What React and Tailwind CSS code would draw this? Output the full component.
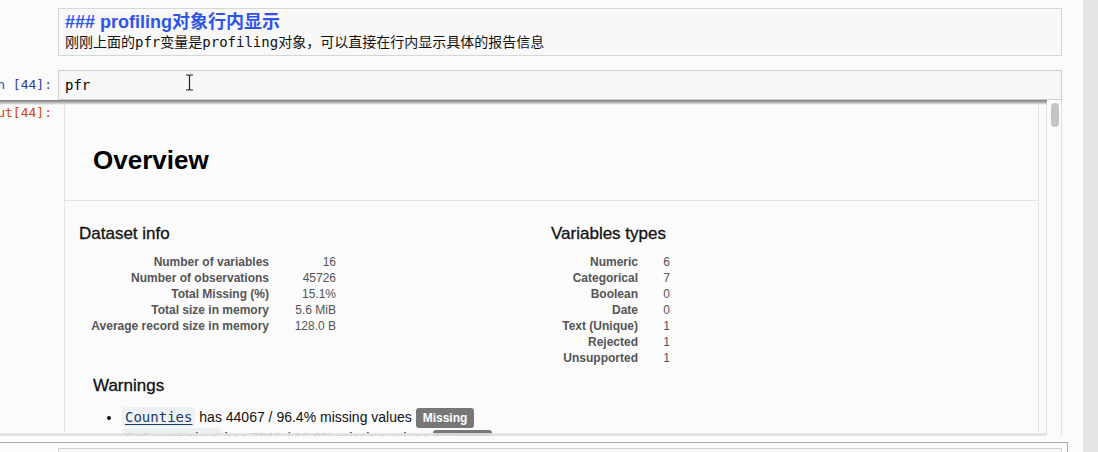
export default function App() {
  const left = [
    ["Number of variables", "16"],
    ["Number of observations", "45726"],
    ["Total Missing (%)", "15.1%"],
    ["Total size in memory", "5.6 MiB"],
    ["Average record size in memory", "128.0 B"],
  ];
  const right = [
    ["Numeric", "6"],
    ["Categorical", "7"],
    ["Boolean", "0"],
    ["Date", "0"],
    ["Text (Unique)", "1"],
    ["Rejected", "1"],
    ["Unsupported", "1"],
  ];
  const warnings = [
    ["Counties", "has 44067 / 96.4% missing values"],
    ["CoCountries", "has 7815 / 16.9% missing values"],
  ];
  return (
    <div className="w-[1098px] h-[452px] overflow-hidden flex bg-[#fbfbfb] font-['Liberation_Sans',Arial,sans-serif]">
      <div className="w-[1083px] shrink-0 flex flex-col pt-[8px]">
        {/* markdown cell */}
        <div className="flex">
          <div className="w-[58px] shrink-0" />
          <div className="w-[1004px] h-[48px] border border-[#d6d6d6] bg-[#f8f8f8] px-[6px] pt-[2px]">
            <div className="text-[18px] leading-[22px] font-bold text-[#2f54eb] font-['Liberation_Sans','Noto_Sans_CJK_SC',sans-serif] whitespace-nowrap">
              ### profiling对象行内显示
            </div>
            <div className="text-[14px] leading-[18px] text-[#111] font-['DejaVu_Sans_Mono','Noto_Sans_CJK_SC',monospace] whitespace-nowrap">
              刚刚上面的pfr变量是profiling对象，可以直接在行内显示具体的报告信息
            </div>
          </div>
        </div>

        {/* code cell */}
        <div className="flex mt-[14px]">
          <div className="w-[58px] shrink-0 flex justify-end items-center pr-[6px] overflow-hidden">
            <span className="shrink-0 whitespace-nowrap text-[13px] text-[#303f9f] font-['DejaVu_Sans_Mono',monospace]">
              In&nbsp;[44]:
            </span>
          </div>
          <div className="relative w-[1004px] h-[30px] border border-[#cfcfcf] bg-[#f7f7f7] px-[6px] flex items-center">
            <span className="text-[14px] text-black font-['DejaVu_Sans_Mono',monospace]">pfr</span>
            <svg className="absolute left-[126px] top-[3px]" width="9" height="17" viewBox="0 0 9 17">
              <path d="M1 1h2.5l1 1 1-1H8M4.5 2v13M1 16h2.5l1-1 1 1H8" stroke="#222" strokeWidth="1.2" fill="none" />
            </svg>
          </div>
        </div>

        {/* output area */}
        <div className="relative flex h-[336px]">
          <div className="w-[1047px] shrink-0 flex border-r border-[#e2e2e2]">
            <div className="w-[64px] shrink-0 flex justify-end pr-[12px] pt-[5px] overflow-hidden">
              <span className="shrink-0 whitespace-nowrap text-[13px] leading-[16px] text-[#d84315] font-['DejaVu_Sans_Mono',monospace]">
                Out[44]:
              </span>
            </div>
            <div className="w-[975px] shrink-0 border-x border-[#e4e4e4] bg-[#fbfbfb] overflow-hidden">
              <div className="h-[101px] border-b border-[#e4e4e4] pl-[28px] pt-[45px]">
                <div className="text-[26px] leading-[30px] font-bold text-black">Overview</div>
              </div>
              <div className="grid grid-cols-[486px_1fr] pt-[23px]">
                <div className="pl-[14px]">
                  <div className="text-[17px] leading-[20px] text-[#111] [-webkit-text-stroke:0.3px_#111]">Dataset info</div>
                  <div className="grid grid-cols-[190px_67px] mt-[10px] text-[12px] leading-[16px] text-[#555]">
                    {left.map(([k, v]) => (
                      <div key={k} className="contents">
                        <div className="text-right font-bold whitespace-nowrap">{k}</div>
                        <div className="text-right">{v}</div>
                      </div>
                    ))}
                  </div>
                </div>
                <div>
                  <div className="text-[17px] leading-[20px] text-[#111] [-webkit-text-stroke:0.3px_#111]">Variables types</div>
                  <div className="grid grid-cols-[87px_32px] mt-[10px] text-[12px] leading-[16px] text-[#555]">
                    {right.map(([k, v]) => (
                      <div key={k} className="contents">
                        <div className="text-right font-bold whitespace-nowrap">{k}</div>
                        <div className="text-right">{v}</div>
                      </div>
                    ))}
                  </div>
                </div>
              </div>
              <div className="pl-[28px] mt-[10px] text-[17px] leading-[20px] text-[#111] [-webkit-text-stroke:0.3px_#111]">
                Warnings
              </div>
              <ul className="list-disc pl-[57px] mt-[11px] text-[14px] leading-[20px] text-[#111]">
                {warnings.map(([c, t]) => (
                  <li key={c} className="whitespace-nowrap">
                    <code className="bg-[#eef1f3] rounded-[3px] px-[3px] py-[2px] text-[14px] text-[#1b3a63] underline underline-offset-2 font-['DejaVu_Sans_Mono',monospace]">
                      {c}
                    </code>{" "}
                    {t}{" "}
                    <span className="inline-block bg-[#777] text-white font-bold text-[12px] leading-[16px] px-[7px] py-[2px] rounded-[3px] align-middle">
                      Missing
                    </span>
                  </li>
                ))}
              </ul>
            </div>
          </div>
          <div className="w-[15px] shrink-0 border-r border-[#e2e2e2] pt-[3px] pl-[4px]">
            <div className="w-[8px] h-[24px] rounded-full bg-[#c4c4c4]" />
          </div>
          <div className="absolute left-0 top-0 w-[1047px] h-[5px] bg-gradient-to-b from-[#7c7c7c] via-[#b5b5b5] to-transparent" />
          <div className="absolute left-0 bottom-0 w-[1047px] h-[3px] bg-[#e0e0e0]/90" />
        </div>

        {/* next cell */}
        <div className="mt-[6px] w-[1068px] flex-1 border-t border-r border-[#ababab] pt-[5px]">
          <div className="ml-[58px] w-[1004px] h-full border-t border-x border-[#cfcfcf] bg-[#f7f7f7]" />
        </div>
      </div>
      <div className="flex-1 bg-[#e6e6e6]" />
    </div>
  );
}
